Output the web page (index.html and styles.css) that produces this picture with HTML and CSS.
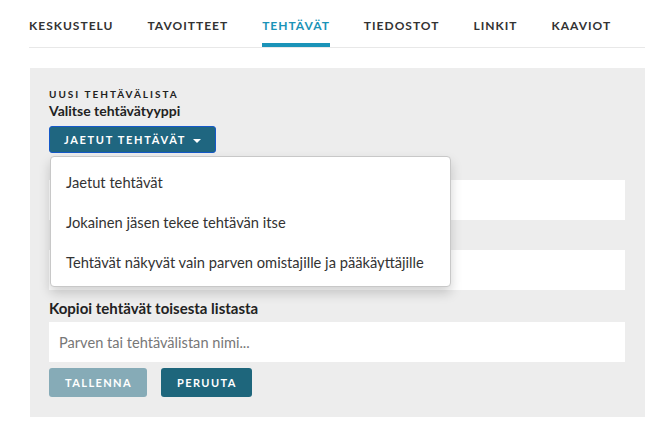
FILE: index.html
```html
<!DOCTYPE html>
<html lang="fi">
<head>
    <meta charset="UTF-8">
    <meta name="viewport" content="width=device-width, initial-scale=1.0">
    <title>Tehtävät</title>
    <link rel="stylesheet" href="styles.css">
</head>
<body>
    <div class="tabs">
        <a class="tab">KESKUSTELU</a>
        <a class="tab">TAVOITTEET</a>
        <a class="tab active">TEHTÄVÄT</a>
        <a class="tab">TIEDOSTOT</a>
        <a class="tab">LINKIT</a>
        <a class="tab">KAAVIOT</a>
    </div>

    <div class="panel">
        <p class="overline">UUSI TEHTÄVÄLISTA</p>
        <p class="label">Valitse tehtävätyyppi</p>

        <div class="dropdown">
            <button class="dropdown_btn">JAETUT TEHTÄVÄT <span class="caret"></span></button>
            <ul class="dropdown_menu">
                <li>Jaetut tehtävät</li>
                <li>Jokainen jäsen tekee tehtävän itse</li>
                <li>Tehtävät näkyvät vain parven omistajille ja pääkäyttäjille</li>
            </ul>
        </div>

        <!-- nämä otsikot jäävät valikon alle -->
        <div class="field first">
            <div class="label_space"></div>
            <input class="input" type="text">
        </div>
        <div class="field second">
            <div class="label_space"></div>
            <input class="input" type="text">
        </div>
        <div class="field third">
            <p class="label big">Kopioi tehtävät toisesta listasta</p>
            <input class="input" type="text" placeholder="Parven tai tehtävälistan nimi...">
        </div>

        <div class="actions">
            <button class="btn save">TALLENNA</button>
            <button class="btn cancel">PERUUTA</button>
        </div>
    </div>
</body>
</html>
```

FILE: styles.css
```css
body{
    margin: 0;
    font-family: "Lato", "Noto Sans", sans-serif;
    color: #222;
    background: #fff;
}

p{
    margin: 0;
}

.tabs{
    display: flex;
    gap: 34px;
    margin: 0 27px 0 29px;
    height: 47px;
    border-bottom: 1px solid #e8e8e8;
}

.tab{
    display: flex;
    align-items: center;
    padding-top: 7px;
    box-sizing: border-box;
    font-size: 12px;
    font-weight: 700;
    letter-spacing: 1px;
    color: #333;
    border-bottom: 4px solid transparent;
}

.tab.active{
    color: #1a93b8;
    border-bottom-color: #1a93b8;
}

.panel{
    margin: 20px 27px 0 30px;
    height: 349px;
    box-sizing: border-box;
    padding: 20px 20px 0 19px;
    background: #ededed;
}

.overline{
    font-size: 10px;
    font-weight: 700;
    letter-spacing: 2px;
    line-height: 12px;
    color: #222;
}

.label{
    font-size: 14px;
    font-weight: 700;
    line-height: 18px;
    color: #222;
    margin-top: 2px;
}

.label.big{
    font-size: 15px;
}

.dropdown{
    position: relative;
    margin-top: 6px;
    height: 27px;
}

.dropdown_btn{
    height: 27px;
    width: 167px;
    padding: 0;
    background: #1f6680;
    border: 1px solid #1559c9;
    border-radius: 3px;
    color: #fff;
    font-family: inherit;
    font-size: 11px;
    font-weight: 700;
    letter-spacing: 1.7px;
}

.caret{
    display: inline-block;
    vertical-align: middle;
    margin-left: 3px;
    border-top: 4px solid #fff;
    border-left: 4px solid transparent;
    border-right: 4px solid transparent;
}

.dropdown_menu{
    position: absolute;
    top: 30px;
    left: 1px;
    z-index: 2;
    width: 401px;
    height: 131px;
    box-sizing: border-box;
    margin: 0;
    padding: 5px 0;
    list-style: none;
    background: #fff;
    border: 1px solid #c8c8c8;
    border-radius: 4px;
    box-shadow: 0 6px 12px rgba(0,0,0,0.18);
}

.dropdown_menu li{
    height: 40px;
    line-height: 40px;
    padding-left: 15px;
    font-size: 14.7px;
    color: #333;
}

.label_space{
    height: 18px;
    margin-bottom: 5px;
}

.field .label{
    margin: 0 0 5px 0;
}

.field.first{
    margin-top: 4px;
}

.field.second{
    margin-top: 7px;
}

.field.third{
    margin-top: 9px;
}

.input{
    display: block;
    width: 576px;
    height: 40px;
    box-sizing: border-box;
    border: none;
    padding: 0 10px;
    background: #fff;
    font-family: inherit;
    font-size: 14.6px;
    color: #333;
}

.input::placeholder{
    color: #777;
}

.actions{
    display: flex;
    gap: 14px;
    margin-top: 6px;
}

.btn{
    height: 29px;
    padding: 0 16px;
    border: none;
    border-radius: 3px;
    color: #fff;
    font-family: inherit;
    font-size: 11px;
    font-weight: 700;
    letter-spacing: 1.4px;
}

.save{
    width: 98px;
    background: #86abb7;
}

.cancel{
    width: 91px;
    background: #1e667c;
}
```
